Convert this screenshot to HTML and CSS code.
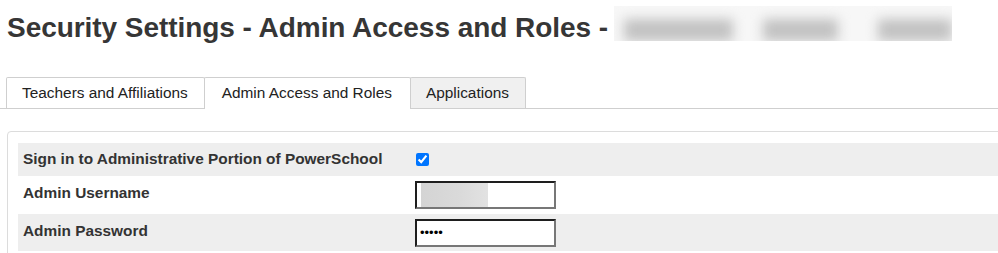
FILE: index.html
```html
<!DOCTYPE html>
<html lang="en">
<head>
<meta charset="utf-8">
<title>Security Settings</title>
<link rel="stylesheet" href="styles.css">
</head>
<body>
<h1 class="title">Security Settings - Admin Access and Roles - <span class="redacted"><span class="blob b1"></span><span class="blob b2"></span><span class="blob b3"></span></span></h1>
<ul class="tabs">
  <li class="tab">Teachers and Affiliations</li>
  <li class="tab active">Admin Access and Roles</li>
  <li class="tab inactive">Applications</li>
</ul>
<div class="panel">
  <div class="row shaded">
    <div class="label">Sign in to Administrative Portion of PowerSchool</div>
    <div class="field"><input type="checkbox" class="check" checked></div>
  </div>
  <div class="row">
    <div class="label">Admin Username</div>
    <div class="field"><input type="text" class="text username" value=""></div>
  </div>
  <div class="row shaded last">
    <div class="label">Admin Password</div>
    <div class="field"><input type="password" class="text" value="12345"></div>
  </div>
</div>
</body>
</html>
```
FILE: styles.css
```css
html, body {
  margin: 0;
  padding: 0;
  background: #fff;
  overflow: hidden;
}
body {
  font-family: "Liberation Sans", Arial, sans-serif;
  color: #333;
}
.title {
  margin: 12px 0 0 7px;
  font-size: 28px;
  line-height: 32px;
  font-weight: bold;
  color: #363636;
  white-space: nowrap;
  display: flex;
  align-items: center;
  letter-spacing: -0.05px;
}
.redacted {
  display: inline-flex;
  width: 338px;
  height: 35px;
  margin-left: 6px;
  margin-top: -9px;
  background: #f7f7f7;
  align-items: center;
  overflow: hidden;
}
.blob {
  display: block;
  height: 22px;
  margin-top: 12px;
  background: #c2c2c2;
  filter: blur(6px);
}
.b1 { width: 110px; margin-left: 10px; }
.b2 { width: 75px; margin-left: 30px; }
.b3 { width: 75px; margin-left: 40px; }
.tabs {
  list-style: none;
  margin: 33px 0 0 0;
  padding: 0 0 0 6px;
  display: flex;
  border-bottom: 1px solid #cfcfcf;
  height: 31px;
}
.tab {
  box-sizing: border-box;
  height: 31px;
  padding: 0 16px 0 15px;
  border: 1px solid #cfcfcf;
  border-bottom: none;
  border-radius: 2px 2px 0 0;
  background: #fff;
  font-size: 15.4px;
  line-height: 29px;
  color: #222;
  margin-right: -1px;
}
.tab.active {
  height: 32px;
  padding: 0 18px 0 17px;
  background: #fff;
  position: relative;
  z-index: 1;
}
.tab.inactive {
  background: #f0f0f0;
}
.panel {
  margin: 22px -20px 0 7px;
  border: 1px solid #dcdcdc;
  border-radius: 4px 0 0 0;
  padding: 11px 0 2px 10px;
}
.row {
  display: grid;
  grid-template-columns: 397px 1fr;
  align-items: center;
  height: 38px;
}
.row:first-child {
  height: 33px;
}
.row.last {
  height: 37px;
}
.row.shaded {
  background: #eeeeee;
}
.label {
  padding: 0 0 2px 5px;
  font-size: 15.4px;
  font-weight: bold;
  color: #333;
}
.row + .row .label {
  padding-bottom: 4px;
}
.field {
  display: flex;
  align-items: center;
}
.check {
  margin: 0 0 1px 1px;
  width: 13px;
  height: 13px;
}
.text {
  box-sizing: border-box;
  width: 141px;
  height: 28px;
  margin: 0;
  padding: 0 3px;
  border: 2px solid;
  border-color: #1e1e1e #777 #777 #1e1e1e;
  background: #fff;
  font-family: "Liberation Sans", Arial, sans-serif;
  font-size: 13px;
  color: #000;
  outline: none;
}
.username {
  background: #fff linear-gradient(90deg, #d4d4d4, #dadada 60%, #e2e2e2) no-repeat 4px 0 / 67px 100%;
}
```
